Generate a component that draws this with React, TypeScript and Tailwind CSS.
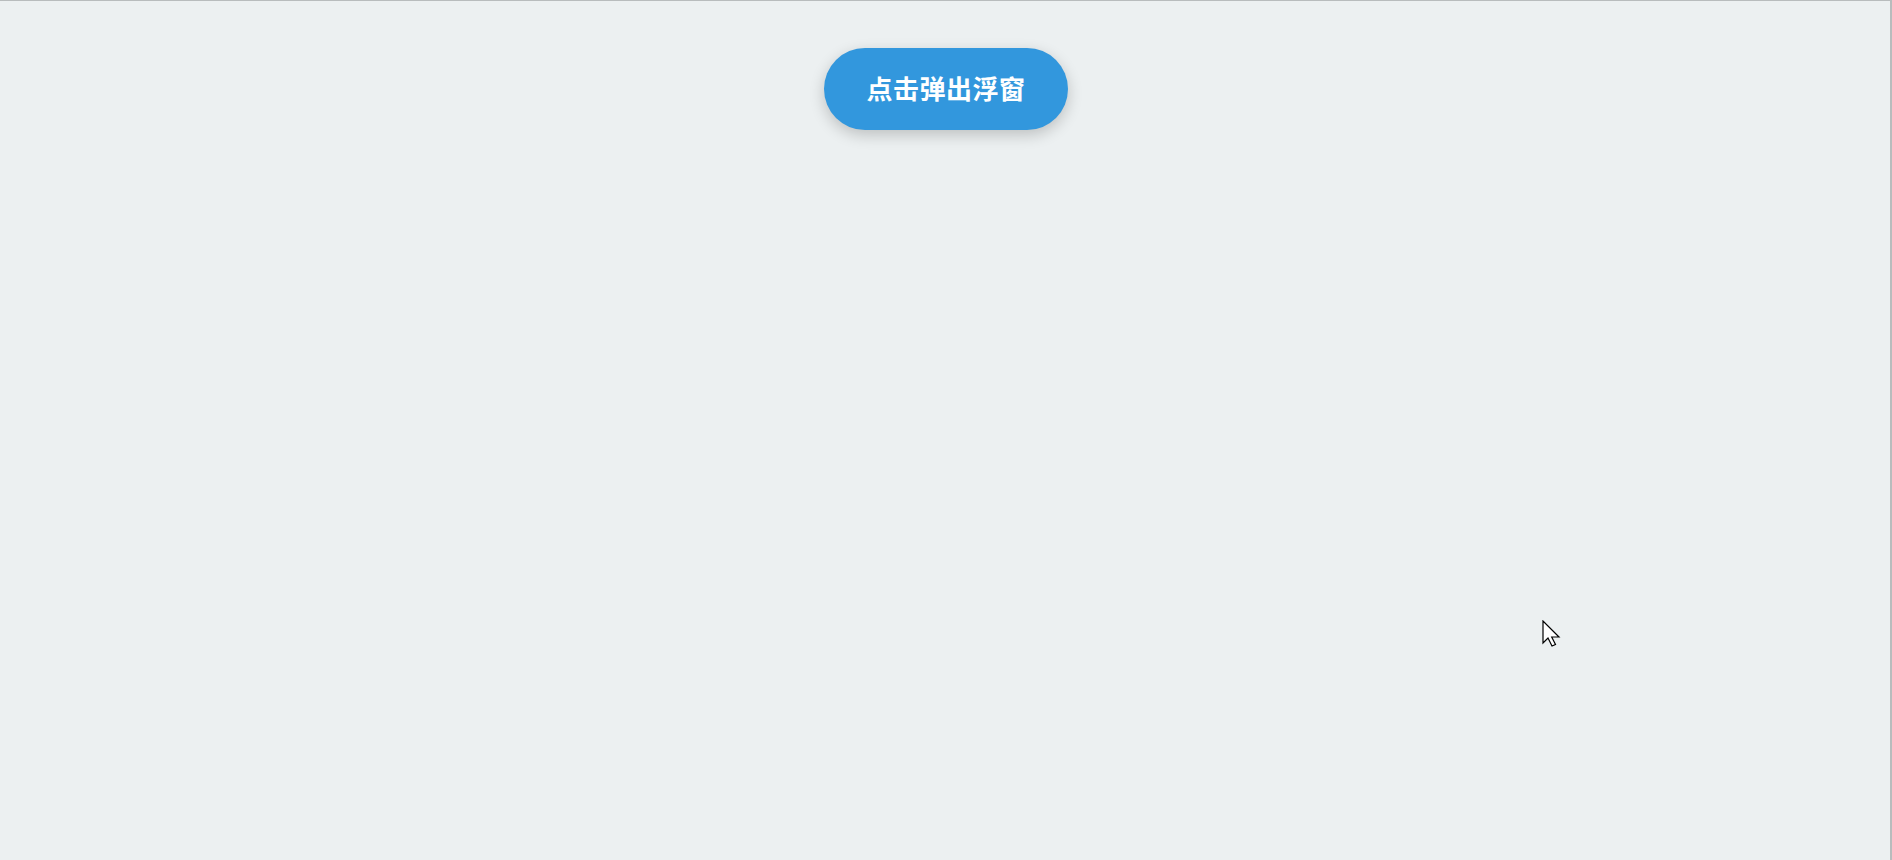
import React from "react";

export default function App() {
  return (
    <div className="relative w-[1892px] h-[860px] bg-[#ecf0f1] border-t border-t-[#b8bcbd] border-r-2 border-r-[#b8bcbd] overflow-hidden" style={{ fontFamily: '"Noto Sans", "Noto Sans CJK SC", sans-serif' }}>
      <div className="flex justify-center pt-[47px] pl-[2px]">
        <button className="w-[244px] h-[82px] rounded-full bg-[#3297dd] text-white text-[26px] font-bold tracking-[0.5px] shadow-[0_5px_15px_rgba(0,0,0,0.2)] flex items-center justify-center">
          点击弹出浮窗
        </button>
      </div>
      <svg className="absolute left-[1542px] top-[619px]" width="20" height="28" viewBox="0 0 20 28">
        <path d="M1 1 L1 23 L6 18 L10 26 L13.5 24.5 L9.7 17 L17 17 Z" fill="#fff" stroke="#000" strokeWidth="1.2" strokeLinejoin="miter" />
      </svg>
    </div>
  );
}
